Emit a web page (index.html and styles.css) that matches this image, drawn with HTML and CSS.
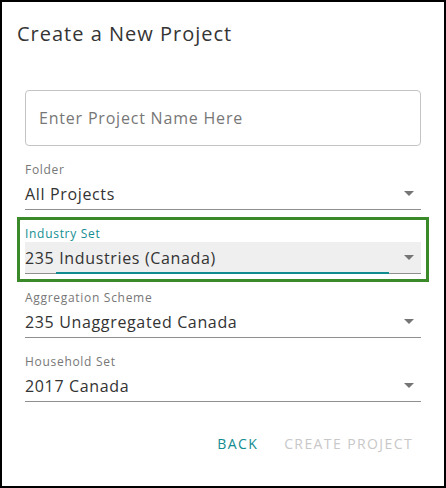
FILE: index.html
```html
<!DOCTYPE html>
<html lang="en">
<head>
<meta charset="utf-8">
<title>Create a New Project</title>
<link rel="stylesheet" href="styles.css">
</head>
<body>
<div class="dialog">
  <h2 class="title">Create a New Project</h2>
  <div class="content">
    <div class="text-input">Enter Project Name Here</div>
    <div class="field">
      <div class="label">Folder</div>
      <div class="select"><span class="value">All Projects</span><span class="arrow"></span></div>
    </div>
    <div class="field focused">
      <div class="label">Industry Set</div>
      <div class="select"><span class="value">235 Industries (Canada)</span><span class="arrow"></span><span class="ink"></span></div>
    </div>
    <div class="field">
      <div class="label">Aggregation Scheme</div>
      <div class="select"><span class="value">235 Unaggregated Canada</span><span class="arrow"></span></div>
    </div>
    <div class="field">
      <div class="label">Household Set</div>
      <div class="select"><span class="value">2017 Canada</span><span class="arrow"></span></div>
    </div>
  </div>
  <div class="actions">
    <button class="btn btn-back">Back</button>
    <button class="btn btn-create" disabled>Create Project</button>
  </div>
</div>
</body>
</html>
```

FILE: styles.css
```css
html, body {
  margin: 0;
  padding: 0;
  background: #fff;
}
body {
  font-family: "Open Sans", "DejaVu Sans", sans-serif;
  color: #333;
}
.dialog {
  box-sizing: border-box;
  width: 446px;
  height: 488px;
  border: 2px solid #000;
  background: #fff;
}
.title {
  margin: 0;
  padding: 20px 15px 0;
  font-size: 20px;
  line-height: 24px;
  font-weight: 400;
  letter-spacing: 1px;
  color: #353535;
}
.content {
  padding: 44px 23px 0;
}
.text-input {
  box-sizing: border-box;
  height: 56px;
  border: 1px solid #c4c4c4;
  border-radius: 4px;
  padding: 0 13px;
  display: flex;
  align-items: center;
  font-size: 16px;
  letter-spacing: 0.8px;
  color: #777;
}
.field {
  margin-top: 15px;
}
.label {
  font-size: 12px;
  line-height: 17px;
  height: 17px;
  letter-spacing: 0.7px;
  color: #777;
}
.select {
  position: relative;
  height: 31px;
  border-bottom: 1px solid #8f8f8f;
  display: flex;
  align-items: center;
  justify-content: space-between;
  font-size: 16px;
  line-height: 24px;
  color: #333;
}
.value {
  letter-spacing: 0.65px;
}
.arrow {
  width: 0;
  height: 0;
  margin-right: 7px;
  border-left: 5px solid transparent;
  border-right: 5px solid transparent;
  border-top: 5px solid #757575;
}
.focused {
  outline: 3px solid #3a8a2a;
  outline-offset: 5px;
}
.focused .label {
  color: #148e92;
}
.focused .select {
  background: #efefef;
}
.ink {
  position: absolute;
  left: 31px;
  right: 32px;
  bottom: -1px;
  height: 2px;
  background: #128b8f;
}
.actions {
  display: flex;
  justify-content: flex-end;
  gap: 10px;
  padding: 24px 23px 0;
}
.btn {
  font-family: inherit;
  font-size: 14px;
  line-height: 36px;
  height: 36px;
  padding: 0 8px;
  border: 0;
  background: transparent;
  text-transform: uppercase;
  letter-spacing: 1.4px;
  cursor: pointer;
}
.btn-back {
  color: #138c90;
}
.btn-create {
  color: #c8c8c8;
}
```
